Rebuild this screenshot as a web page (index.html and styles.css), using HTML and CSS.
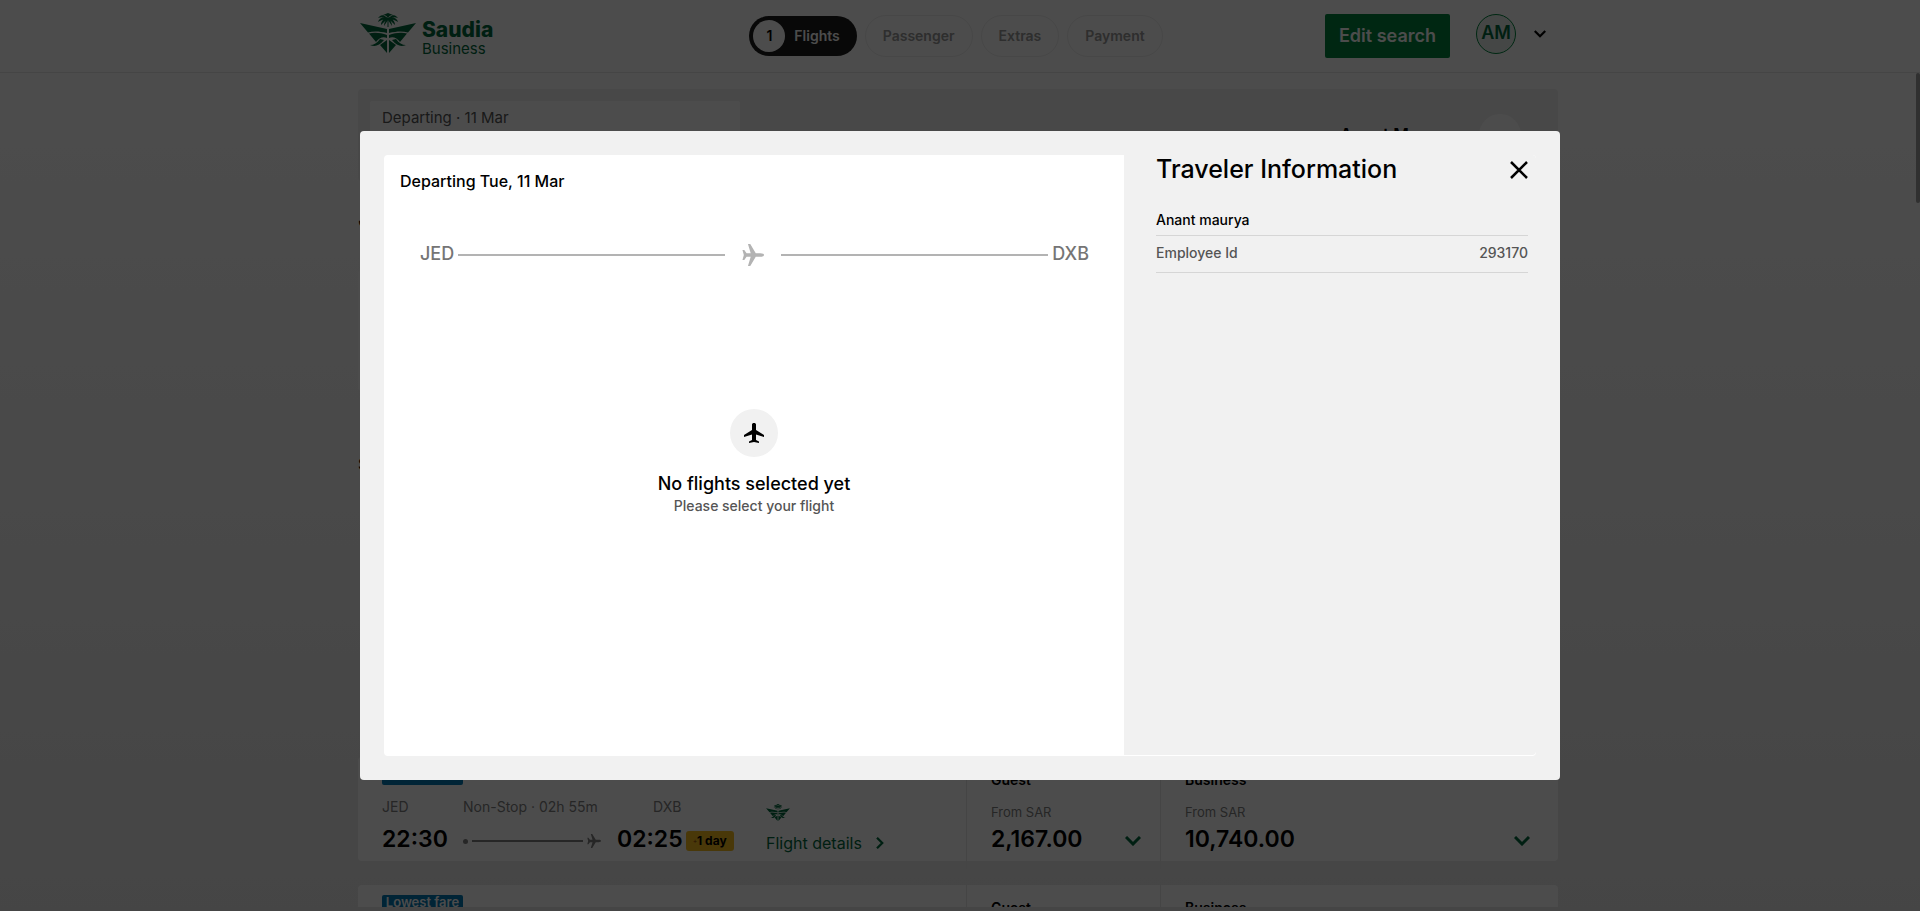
FILE: index.html
```html
<!DOCTYPE html>
<html lang="en">
<head>
<meta charset="utf-8">
<title>Saudia Business</title>
<link rel="stylesheet" href="styles.css">
</head>
<body>
<svg class="defs" aria-hidden="true">
  <symbol id="emblem" viewBox="0 0 56 40">
    <path d="M0 10 L27 16 V20 C19 18 13 18 8 19.500 Z M56 10 L29 16 V20 C37 18 43 18 48 19.500 Z"/>
    <path d="M9 20.500 C15 19 21 20 27 22 V25 C23 23 19 25 16 29 Z M47 20.500 C41 19 35 20 29 22 V25 C33 23 37 25 40 29 Z"/>
    <path d="M20 32 L27 27 V40 Z M36 32 L29 27 V40 Z"/>
    <path d="M10 32 C14 32 17 30 20 26 L24 27 C19 33 15 34 10 32 Z M46 32 C42 32 39 30 36 26 L32 27 C37 33 41 34 46 32 Z"/>
    <path d="M27.500 5 V14 H28.500 V5 Z"/>
    <path d="M28 5 C26 1 21 1 18 5 C21 4 24 4 28 6 C32 4 35 4 38 5 C35 1 30 1 28 5 Z M28 5 C24 3 19 5 18 9 C21 7 24 6 28 6 C32 6 35 7 38 9 C37 5 32 3 28 5 Z M28 5 C24 5 21 8 21 12 C24 9 26 7 28 6 C30 7 32 9 35 12 C35 8 32 5 28 5 Z M28 5 C26 7 24 9 24 13 L28 7 L32 13 C32 9 30 7 28 5 Z M23 2 L28 0 L33 2 L28 5 Z"/>
  </symbol>
  <symbol id="plane-side" viewBox="0 0 24 24">
    <path d="M24 12 C24 10.800 22.500 10 20 10 H15 L9 0 H6.500 L9.500 10 H5 L2.500 6.500 H.500 L2 12 L.500 17.500 H2.500 L5 14 H9.500 L6.500 24 H9 L15 14 H20 C22.500 14 24 13.200 24 12 Z"/>
  </symbol>
  <symbol id="plane-up" viewBox="0 0 24 24">
    <path d="M22 16 V14 L14 9 V3.500 C14 2.700 13.300 2 12 2 S10 2.700 10 3.500 V9 L2 14 V16 L10 13.500 V19 L7 20.500 V22 L12 21 L17 22 V20.500 L14 19 V13.500 Z"/>
  </symbol>
  <symbol id="chevron" viewBox="0 0 16 10"><path d="M1 1 L8 8 L15 1" fill="none" stroke="currentColor" stroke-width="3"/></symbol>
</svg>

<header class="header">
  <div class="header-inner">
    <a class="logo" href="#">
      <svg class="logo-mark"><use href="#emblem"/></svg>
      <span class="logo-text"><span class="logo-name">Saudia</span><span class="logo-sub">Business</span></span>
    </a>
    <nav class="steps">
      <a class="step step-active" href="#"><span class="step-number">1</span>Flights</a>
      <a class="step" href="#">Passenger</a>
      <a class="step" href="#">Extras</a>
      <a class="step" href="#">Payment</a>
    </nav>
    <div class="account">
      <button class="edit" type="button">Edit search</button>
      <span class="avatar">AM</span>
      <button class="account-toggle" type="button" aria-label="Account menu"><svg><use href="#chevron"/></svg></button>
    </div>
  </div>
</header>

<main class="main">
  <div class="content">
    <section class="summary">
      <div class="summary-leg">Departing · 11 Mar</div>
      <div class="summary-user"><span>Anant M</span><span class="summary-circle"></span></div>
    </section>
    <h1 class="heading">JED</h1>
    <div class="dates"></div>
    <p class="sort">Sort</p>
    <article class="fare">
      <div class="flight">
        <span class="tag">Lowest fare</span>
        <div class="flight-body">
          <div class="times">
            <span class="muted">JED</span>
            <span class="muted">Non-Stop · 02h 55m</span>
            <span class="muted end">DXB</span>
            <strong class="time">22:30</strong>
            <span class="track"><i class="dot"></i><i class="rule"></i><svg><use href="#plane-side"/></svg></span>
            <strong class="time">02:25</strong>
            <span class="day"><span class="plus">+</span>1 day</span>
          </div>
          <div class="details">
            <svg class="mini-mark"><use href="#emblem"/></svg>
            <a class="details-link" href="#">Flight details <svg><use href="#chevron"/></svg></a>
          </div>
        </div>
      </div>
      <div class="cabin">
        <b class="cabin-name">Guest</b>
        <span class="from">From SAR</span>
        <div class="price-row"><strong class="price">2,167.00</strong><svg><use href="#chevron"/></svg></div>
      </div>
      <div class="cabin">
        <b class="cabin-name">Business</b>
        <span class="from">From SAR</span>
        <div class="price-row"><strong class="price">10,740.00</strong><svg><use href="#chevron"/></svg></div>
      </div>
    </article>
    <article class="fare">
      <div class="flight"><span class="tag">Lowest fare</span></div>
      <div class="cabin"><b class="cabin-name">Guest</b></div>
      <div class="cabin"><b class="cabin-name">Business</b></div>
    </article>
  </div>
  <div class="thumb"></div>
</main>

<div class="overlay">
  <div class="modal" role="dialog" aria-label="Traveler Information">
    <div class="modal-body">
      <section class="trip">
        <h2 class="trip-title">Departing Tue, 11 Mar</h2>
        <div class="route">
          <span>JED</span><i class="route-line"></i>
          <svg><use href="#plane-side"/></svg>
          <i class="route-line"></i><span>DXB</span>
        </div>
        <div class="empty">
          <span class="empty-icon"><svg><use href="#plane-up"/></svg></span>
          <p class="empty-title">No flights selected yet</p>
          <p class="empty-text">Please select your flight</p>
        </div>
      </section>
      <section class="traveler">
        <div class="traveler-head">
          <h2 class="traveler-title">Traveler Information</h2>
          <button class="close" type="button" aria-label="Close"><svg viewBox="0 0 18 18"><path d="M1 1 L17 17 M17 1 L1 17"/></svg></button>
        </div>
        <h3 class="traveler-name">Anant maurya</h3>
        <dl class="traveler-row"><dt>Employee Id</dt><dd>293170</dd></dl>
      </section>
    </div>
  </div>
</div>
</body>
</html>
```
FILE: styles.css
```css
* { box-sizing: border-box; }
body {
  margin: 0;
  height: 100vh;
  display: flex;
  flex-direction: column;
  overflow: hidden;
  font-family: Inter, "Liberation Sans", sans-serif;
  font-size: 14px;
  line-height: 20px;
  color: #000;
  background: linear-gradient(#fff 8%, #e8e8e8);
}
h1, h2, h3, p, dl, dd { margin: 0; font-weight: 500; }
a { color: inherit; text-decoration: none; }
button { border: 0; padding: 0; background: none; font: inherit; color: inherit; }
svg { display: block; fill: currentColor; flex: none; }
.defs { position: absolute; width: 0; height: 0; }

.header { background: #fff; border-bottom: 1px solid #e6e6e6; padding-right: 4px; }
.header-inner {
  max-width: 1200px;
  height: 72px;
  margin: 0 auto;
  display: grid;
  grid-template-columns: 1fr auto 1fr;
  align-items: center;
}
.logo { display: flex; gap: 6px; padding: 13px 0 0 2px; color: #00693c; align-self: start; }
.logo-mark { width: 56px; height: 40px; }
.logo-text { display: flex; flex-direction: column; padding-top: 4px; }
.logo-name { font-size: 21px; font-weight: 800; line-height: 25px; }
.logo-sub { font-size: 15px; line-height: 20px; margin-top: -3px; }
.steps { display: flex; gap: 8px; align-items: center; padding-right: 4px; }
.step {
  height: 42px;
  padding: 0 17px;
  display: flex;
  align-items: center;
  border: 1px solid #eee;
  border-radius: 21px;
  font-weight: 600;
  color: #999;
}
.step-active { height: 40px; border: 0; background: #1c1c1c; color: #fff; padding: 0 17px 0 4px; gap: 9px; }
.step-number {
  width: 32px;
  height: 32px;
  border-radius: 50%;
  background: #fff;
  color: #000;
  display: grid;
  place-items: center;
}
.account { display: flex; justify-content: flex-end; align-items: flex-start; padding: 14px 12px 0 0; align-self: start; }
.edit { background: #00843d; color: #fff; font-size: 18px; font-weight: 600; height: 44px; padding: 0 14px; border-radius: 2px; }
.avatar {
  width: 40px;
  height: 40px;
  margin: 0 18px 0 26px;
  border: 1px solid #00843d;
  border-radius: 50%;
  background: #e6efea;
  color: #00693c;
  font-size: 18px;
  font-weight: 600;
  line-height: 36px;
  text-align: center;
}
.account-toggle { padding-top: 16px; }
.account-toggle svg { width: 12px; height: 8px; }

.main { flex: 1; min-height: 0; margin-bottom: 4px; padding-right: 4px; overflow: hidden; position: relative; }
.thumb { position: absolute; right: 0; top: 0; width: 4px; height: 130px; background: #a0a0a0; border-radius: 2px; }
.content { max-width: 1200px; margin: 0 auto; padding-top: 16px; }
.summary {
  height: 92px;
  padding: 12px;
  display: flex;
  justify-content: space-between;
  background: #f1f1f1;
  border-radius: 4px;
}
.summary-leg { width: 370px; padding: 7px 12px; background: #fff; border-radius: 2px; color: #555; font-size: 15px; }
.summary-user { display: flex; align-items: center; gap: 70px; padding: 13px 25px 0 0; font-size: 17px; font-weight: 600; align-self: start; }
.summary-circle { width: 42px; height: 42px; border-radius: 50%; background: #fff; }
.heading { padding-top: 24px; font-size: 24px; line-height: 28px; height: 89px; }
.dates { height: 121px; background: #fff; border-radius: 4px; }
.sort { padding-top: 63px; font-size: 16px; height: 366px; }

.fare {
  height: 104px;
  margin-bottom: 24px;
  display: grid;
  grid-template-columns: 608px 194px 1fr;
  background: #fff;
  border-radius: 4px;
}
.flight { padding: 10px 24px; }
.tag { display: block; width: 81px; background: #0078b4; color: #fff; border-radius: 2px; font-size: 13px; font-weight: 600; line-height: 14px; padding-bottom: 4px; text-align: center; }
.flight-body { display: flex; justify-content: space-between; padding-top: 12px; }
.times {
  display: grid;
  grid-template-columns: 65px 138px 65px auto;
  column-gap: 16px;
  grid-template-rows: 20px 28px;
  row-gap: 8px;
  align-items: center;
}
.muted { color: #808080; white-space: nowrap; }
.muted.end { grid-column: 3 / 5; padding-left: 36px; }
.time { font-size: 23px; font-weight: 600; line-height: 28px; }
.track { display: flex; align-items: center; gap: 4px; color: #808080; padding-top: 4px; }
.dot { width: 5px; height: 5px; border-radius: 50%; background: currentColor; }
.rule { flex: 1; height: 2px; background: currentColor; }
.track svg { width: 14px; height: 14px; }
.day { margin: 4px 0 0 -12px; background: #f5bb20; border-radius: 3px; padding: 0 7px; font-size: 12px; font-weight: 700; }
.plus { color: #a05a10; font-size: 6px; vertical-align: 2px; }
.details { width: 176px; color: #00693c; padding-top: 7px; }
.mini-mark { width: 24px; height: 17px; }
.details-link { display: flex; align-items: center; gap: 12px; font-size: 16px; padding-top: 12px; }
.details-link svg { width: 12px; height: 8px; transform: rotate(-90deg); }
.cabin { border-left: 1px solid #e6e6e6; padding: 13px 24px; display: flex; flex-direction: column; }
.cabin-name { font-size: 14px; font-weight: 600; }
.from { font-size: 13px; color: #808080; padding-top: 12px; }
.price-row { display: flex; justify-content: space-between; align-items: center; }
.price { font-size: 23px; font-weight: 600; line-height: 34px; }
.price-row svg { width: 16px; height: 10px; color: #00693c; margin-top: 4px; }
.cabin:nth-child(2) .price-row svg { margin-right: -5px; }
.cabin:nth-child(3) .price-row svg { margin-right: 4px; }

.overlay {
  position: fixed;
  inset: 0;
  display: grid;
  place-items: center;
  background: rgba(0, 0, 0, .7);
}
.modal { width: 1200px; max-width: 100%; padding: 24px; background: #f1f1f1; border-radius: 4px; }
.modal-body { display: grid; grid-template-columns: 740px 1fr; background: #fff; border-radius: 4px; }
.trip { min-height: 601px; padding: 16px; }
.trip-title { font-size: 16px; line-height: 20px; }
.route { display: flex; align-items: center; gap: 4px; padding: 51px 19px 0 20px; font-size: 18px; line-height: 24px; font-weight: 500; color: #757575; }
.route-line { flex: 1; height: 2px; margin-top: 1px; background: #b3b3b3; }
.route svg { width: 22px; height: 22px; margin: 2px 13px 0; color: #b3b3b3; }
.empty { display: flex; flex-direction: column; align-items: center; padding-top: 143px; text-align: center; }
.empty-icon { width: 48px; height: 48px; border-radius: 50%; background: #f1f1f1; display: grid; place-items: center; }
.empty-icon svg { width: 24px; height: 24px; }
.empty-title { font-size: 18px; line-height: 24px; padding-top: 15px; }
.empty-text { line-height: 20px; color: #555; }
.traveler { margin-bottom: 1px; padding: 0 8px 0 32px; background: #f1f1f1; border-radius: 0 4px 4px 0; }
.traveler-head { display: flex; justify-content: space-between; align-items: center; }
.traveler-title { font-size: 25px; line-height: 28px; }
.close svg { width: 18px; height: 18px; fill: none; stroke: #000; stroke-width: 2.500; margin-top: 2px; }
.traveler-name { font-size: 14px; line-height: 20px; padding: 27px 0 5px; border-bottom: 1px solid #d6d6d6; }
.traveler-row { display: flex; justify-content: space-between; padding: 7px 0 9px; border-bottom: 1px solid #d6d6d6; color: #555; }
```
